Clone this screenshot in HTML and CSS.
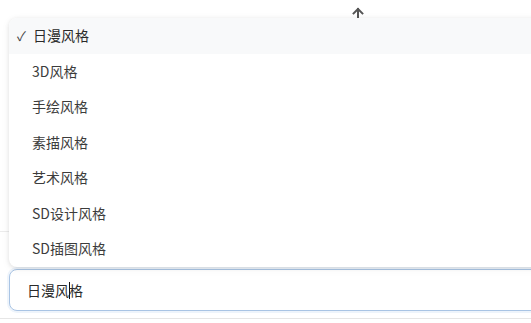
FILE: index.html
```html
<!DOCTYPE html>
<html lang="zh">
<head>
  <meta charset="utf-8" />
  <title>风格选择</title>
  <link rel="stylesheet" href="styles.css">
</head>
<body>
  <div class="panel">
    <div class="top">
      <svg class="up" width="12" height="12" viewBox="0 0 12 12">
        <path d="M6 11V2M1.6 6.4L6 2l4.4 4.4" fill="none" stroke="#555" stroke-width="2" stroke-linecap="square"/>
      </svg>
    </div>

    <div class="side-line"></div>

    <div class="field">
      <div class="input">日漫风<span class="caret"></span>格</div>
    </div>

    <!-- dropdown -->
    <ul class="menu">
      <li class="item selected"><span class="check">✓</span>日漫风格</li>
      <li class="item">3D风格</li>
      <li class="item">手绘风格</li>
      <li class="item">素描风格</li>
      <li class="item">艺术风格</li>
      <li class="item">SD设计风格</li>
      <li class="item">SD插图风格</li>
    </ul>
  </div>
</body>
</html>
```

FILE: styles.css
```css
html,body{margin:0;background:#fff;font-family:"Noto Sans CJK SC","Noto Sans",sans-serif;color:#333}
.panel{position:relative;height:318px;border-bottom:1px solid #e6e6e6;overflow:hidden}
.top{height:18px;display:flex;justify-content:flex-start;padding-left:352px;align-items:flex-start;padding-top:7px;box-sizing:border-box}
.up{display:block}
.side-line{height:1px;width:9px;background:#ececec;margin-top:213px}
.field{padding:37px 0 0 9px}
.input{height:40px;margin-right:-20px;border:1px solid #a9c4e4;border-radius:8px;box-shadow:0 0 0 2px #eef4fb;padding-left:17px;font-size:14px;line-height:40px;color:#2a2a2a;background:#fff;display:flex;align-items:center}
.caret{display:inline-block;width:1px;height:17px;background:#111;margin:0 -1px 0 0}
.menu{position:absolute;top:18px;left:9px;right:-20px;margin:0;padding:0;list-style:none;background:#fff;border-radius:8px;box-shadow:0 1px 4px rgba(0,0,0,.1),0 2px 10px rgba(0,0,0,.05);overflow:hidden}
.item{height:35.5px;box-sizing:border-box;padding:0 0 2px 23px;display:flex;align-items:center;font-size:14px;color:#3c3c3c}
.item.selected{height:36px;background:#f8f9fa;padding-left:8px;color:#2a2a2a}
.check{width:16px;color:#444;font-size:13px}
```
